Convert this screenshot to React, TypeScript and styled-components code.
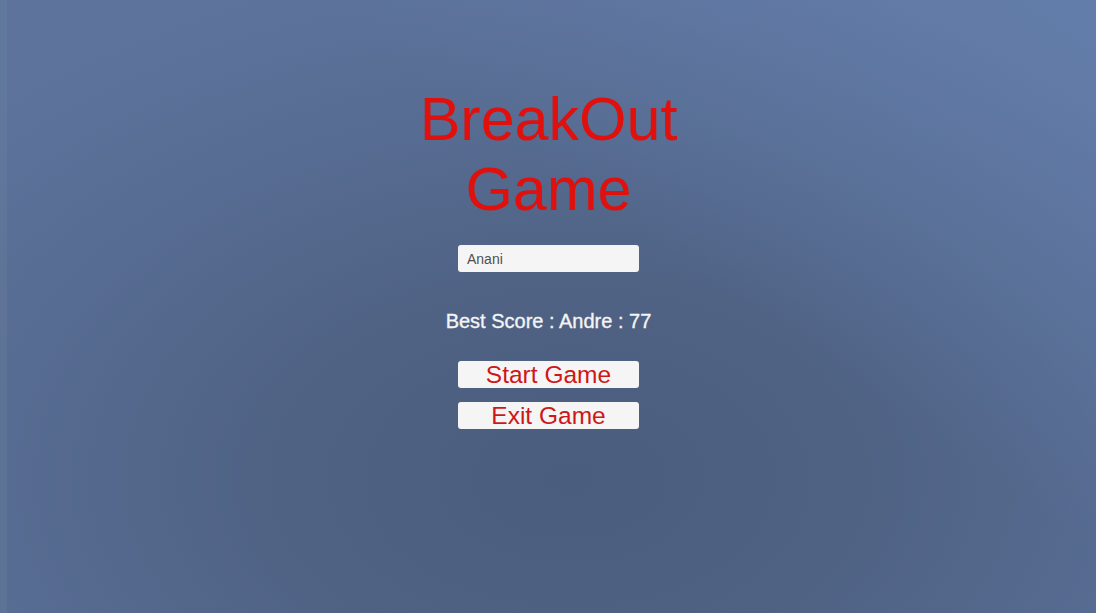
import React from "react";
import styled, { createGlobalStyle } from "styled-components";

const GlobalStyle = createGlobalStyle`
  html, body {
    margin: 0;
    padding: 0;
  }
  body {
    font-family: "Liberation Sans", Arial, sans-serif;
  }
`;

const App = () => {
  return (
    <>
      <GlobalStyle />
      <Screen>
        <Menu>
          <Title>
            BreakOut
            <br />
            Game
          </Title>
          <NameInput defaultValue="Anani" />
          <BestScore>Best Score : Andre : 77</BestScore>
          <ButtonGroup>
            <MenuButton>Start Game</MenuButton>
            <MenuButton>Exit Game</MenuButton>
          </ButtonGroup>
        </Menu>
      </Screen>
    </>
  );
};

export default App;

const Screen = styled.div`
  width: 100vw;
  height: 100vh;
  overflow: hidden;
  box-shadow: inset 7px 0 0 rgba(110, 135, 160, 0.25);
  background:
    linear-gradient(215deg, rgba(104, 134, 182, 0.55) 0%, rgba(104, 134, 182, 0) 40%),
    radial-gradient(
      ellipse 75% 85% at 52% 78%,
      #4b5d7e 0%,
      #4f6284 35%,
      #576c92 70%,
      #5d739c 100%
    );
  display: flex;
  justify-content: center;
`;

const Menu = styled.div`
  display: flex;
  flex-direction: column;
  align-items: center;
  padding-top: 84px;
  margin-left: 1px;
`;

const Title = styled.h1`
  margin: 0;
  font-weight: normal;
  font-size: 61px;
  line-height: 70px;
  color: #e0100c;
  text-align: center;
`;

const NameInput = styled.input`
  box-sizing: border-box;
  width: 181px;
  height: 27px;
  margin-top: 21px;
  padding: 0 9px;
  border: none;
  border-radius: 3px;
  background: #f5f5f5;
  color: #505050;
  font-family: "Liberation Sans", Arial, sans-serif;
  font-size: 14px;
  outline: none;
`;

const BestScore = styled.div`
  margin-top: 38px;
  font-size: 20px;
  line-height: 23px;
  color: #f4f4f4;
  -webkit-text-stroke: 0.35px #f4f4f4;
`;

const ButtonGroup = styled.div`
  display: flex;
  flex-direction: column;
  gap: 14px;
  margin-top: 28px;
`;

const MenuButton = styled.button`
  box-sizing: border-box;
  width: 181px;
  height: 27px;
  padding: 0;
  border: none;
  border-radius: 3px;
  background: #f5f5f5;
  color: #d01616;
  font-family: "Liberation Sans", Arial, sans-serif;
  font-size: 24.5px;
  line-height: 27px;
  cursor: pointer;
`;
